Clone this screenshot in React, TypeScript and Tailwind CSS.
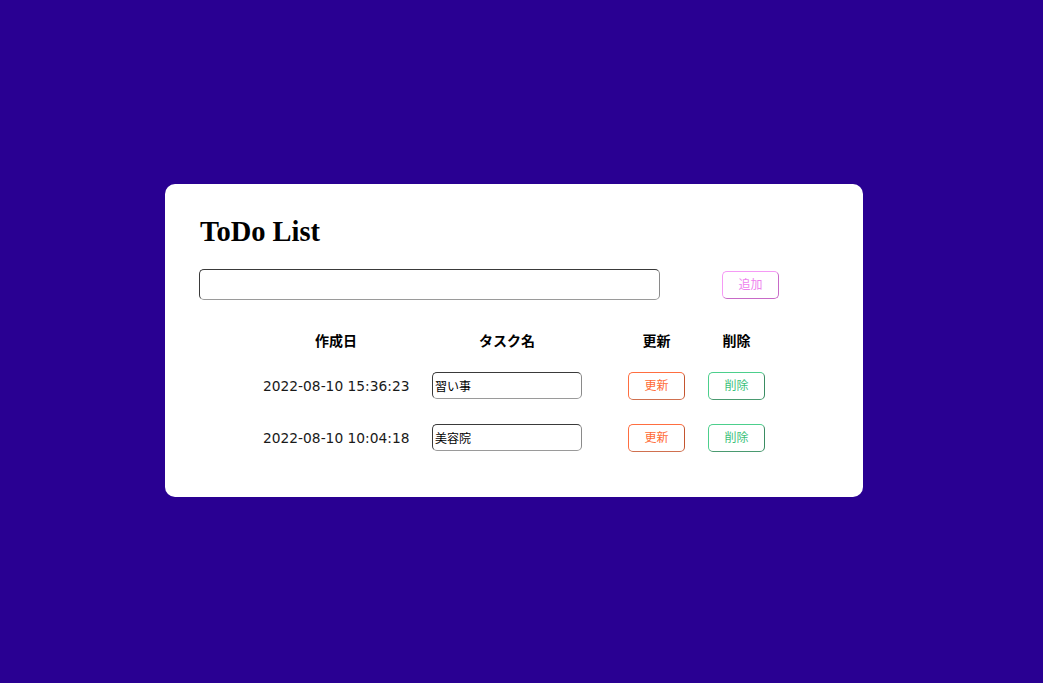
import React from "react";

const rows = [
  { date: "2022-08-10 15:36:23", name: "習い事" },
  { date: "2022-08-10 10:04:18", name: "美容院" },
];

const jp = "font-['DejaVu_Sans','Noto_Sans_CJK_JP',sans-serif]";

export default function App() {
  return (
    <div className="min-h-screen w-full bg-[#290092] pt-[184px]">
      <div className="ml-[165px] w-[698px] rounded-[10px] bg-white pt-[32px] pb-[45px]">
        <h1 className="ml-[35px] font-['Liberation_Serif',serif] text-[28.5px] font-bold leading-[31px] text-black">
          ToDo List
        </h1>
        <div className="ml-[34px] mt-[22px] flex items-center">
          <input
            className="h-[31px] w-[461px] rounded-[5px] border border-t-[#3a3a3a] border-l-[#3a3a3a] border-r-[#8a8a8a] border-b-[#9a9a9a] bg-white px-1 outline-none"
            defaultValue=""
          />
          <button
            className={`ml-[62px] h-[28px] w-[57px] rounded-[5px] border border-t-[#f59af5] border-l-[#f59af5] border-r-[#c76ac7] border-b-[#c76ac7] bg-white text-[12px] text-[#ee82ee] ${jp}`}
          >
            追加
          </button>
        </div>
        <div className="mx-auto mt-[31px] w-fit">
          <div className={`flex h-[20px] items-center text-[14px] font-bold text-black ${jp}`}>
            <div className="w-[146px] text-center">作成日</div>
            <div className="ml-[23px] w-[150px] text-center">タスク名</div>
            <div className="ml-[46px] w-[57px] text-center">更新</div>
            <div className="ml-[23px] w-[57px] text-center">削除</div>
          </div>
          {rows.map((r, i) => (
            <div
              key={i}
              className={`flex h-[28px] items-center ${i === 0 ? "mt-[21px]" : "mt-[24px]"}`}
            >
              <div className={`w-[146px] whitespace-nowrap text-center text-[13.8px] text-[#1a1a1a] ${jp}`}>
                {r.date}
              </div>
              <input
                className={`ml-[23px] h-[27px] w-[150px] self-start rounded-[5px] border border-t-[#3a3a3a] border-l-[#3a3a3a] border-r-[#8a8a8a] border-b-[#9a9a9a] bg-white px-[2px] text-[12px] text-black outline-none ${jp}`}
                defaultValue={r.name}
              />
              <button
                className={`ml-[46px] h-[28px] w-[57px] rounded-[5px] border border-t-[#ff6e40] border-l-[#ff6e40] border-r-[#c4552f] border-b-[#d0704f] bg-white text-[12px] text-[#ff6a35] ${jp}`}
              >
                更新
              </button>
              <button
                className={`ml-[23px] h-[28px] w-[57px] rounded-[5px] border border-t-[#4ccf8c] border-l-[#4ccf8c] border-r-[#3a8c62] border-b-[#4a9a70] bg-white text-[12px] text-[#3cbf7a] ${jp}`}
              >
                削除
              </button>
            </div>
          ))}
        </div>
      </div>
    </div>
  );
}
